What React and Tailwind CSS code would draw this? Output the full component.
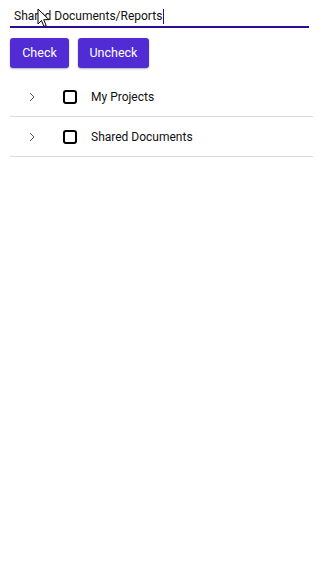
import { useState } from 'react';

const items = [
  { id: 1, name: 'My Projects' },
  { id: 2, name: 'Shared Documents' },
];

const TreeRow = ({ name, checked, onToggle }) => (
  <div className="flex items-center h-10 border-b border-[#dcdcdc]">
    <div className="w-[34px] flex justify-end pr-[9px]">
      <svg width="6" height="10" viewBox="0 0 6 10" fill="none">
        <path d="M1 1l4 4-4 4" stroke="#555" strokeWidth="1" />
      </svg>
    </div>
    <div className="w-[37px] flex justify-end pr-[4px]">
      <button
        onClick={onToggle}
        className={`w-[14px] h-[14px] rounded-[3px] border-2 border-black ${checked ? 'bg-[#512bd4]' : 'bg-white'}`}
      />
    </div>
    <span className="ml-[10px] text-[12px] text-[#111] pt-px">{name}</span>
  </div>
);

const App = () => {
  const [checked, setChecked] = useState({});
  const path = 'Shared Documents/Reports';

  return (
    <div className="relative w-[323px] h-[574px] bg-white px-[10px] pt-[7px]" style={{ fontFamily: 'Roboto, "Noto Sans", sans-serif' }}>
      <div className="w-[299px] border-b-2 border-[#2b0b98] pb-[1px]">
        <div className="h-[18px] leading-[18px] text-[12px] text-[#111] px-[4px] flex items-center">
          <span>{path}</span>
          <span className="inline-block w-px h-[15px] bg-[#2b0b98] ml-px" />
        </div>
      </div>

      <div className="flex gap-[9px] mt-[10px]">
        <button className="h-[30px] w-[59px] rounded-[3px] bg-[#512bd4] text-white text-[12.5px] shadow-[0_1px_2px_rgba(0,0,0,0.3)]">
          Check
        </button>
        <button className="h-[30px] w-[71px] rounded-[3px] bg-[#512bd4] text-white text-[12.5px] shadow-[0_1px_2px_rgba(0,0,0,0.3)]">
          Uncheck
        </button>
      </div>

      <div className="w-[303px] mt-[9px]">
        {items.map((it) => (
          <TreeRow
            key={it.id}
            name={it.name}
            checked={!!checked[it.id]}
            onToggle={() => setChecked({ ...checked, [it.id]: !checked[it.id] })}
          />
        ))}
      </div>

      {/* mouse pointer */}
      <svg className="absolute left-[37px] top-[8px]" width="14" height="20" viewBox="0 0 14 20">
        <path d="M1 1v15l3.5-3.5 2.5 6 2.2-1-2.5-5.8H12z" fill="#fff" stroke="#000" strokeWidth="1" strokeLinejoin="round" />
      </svg>
    </div>
  );
};

export default App;
